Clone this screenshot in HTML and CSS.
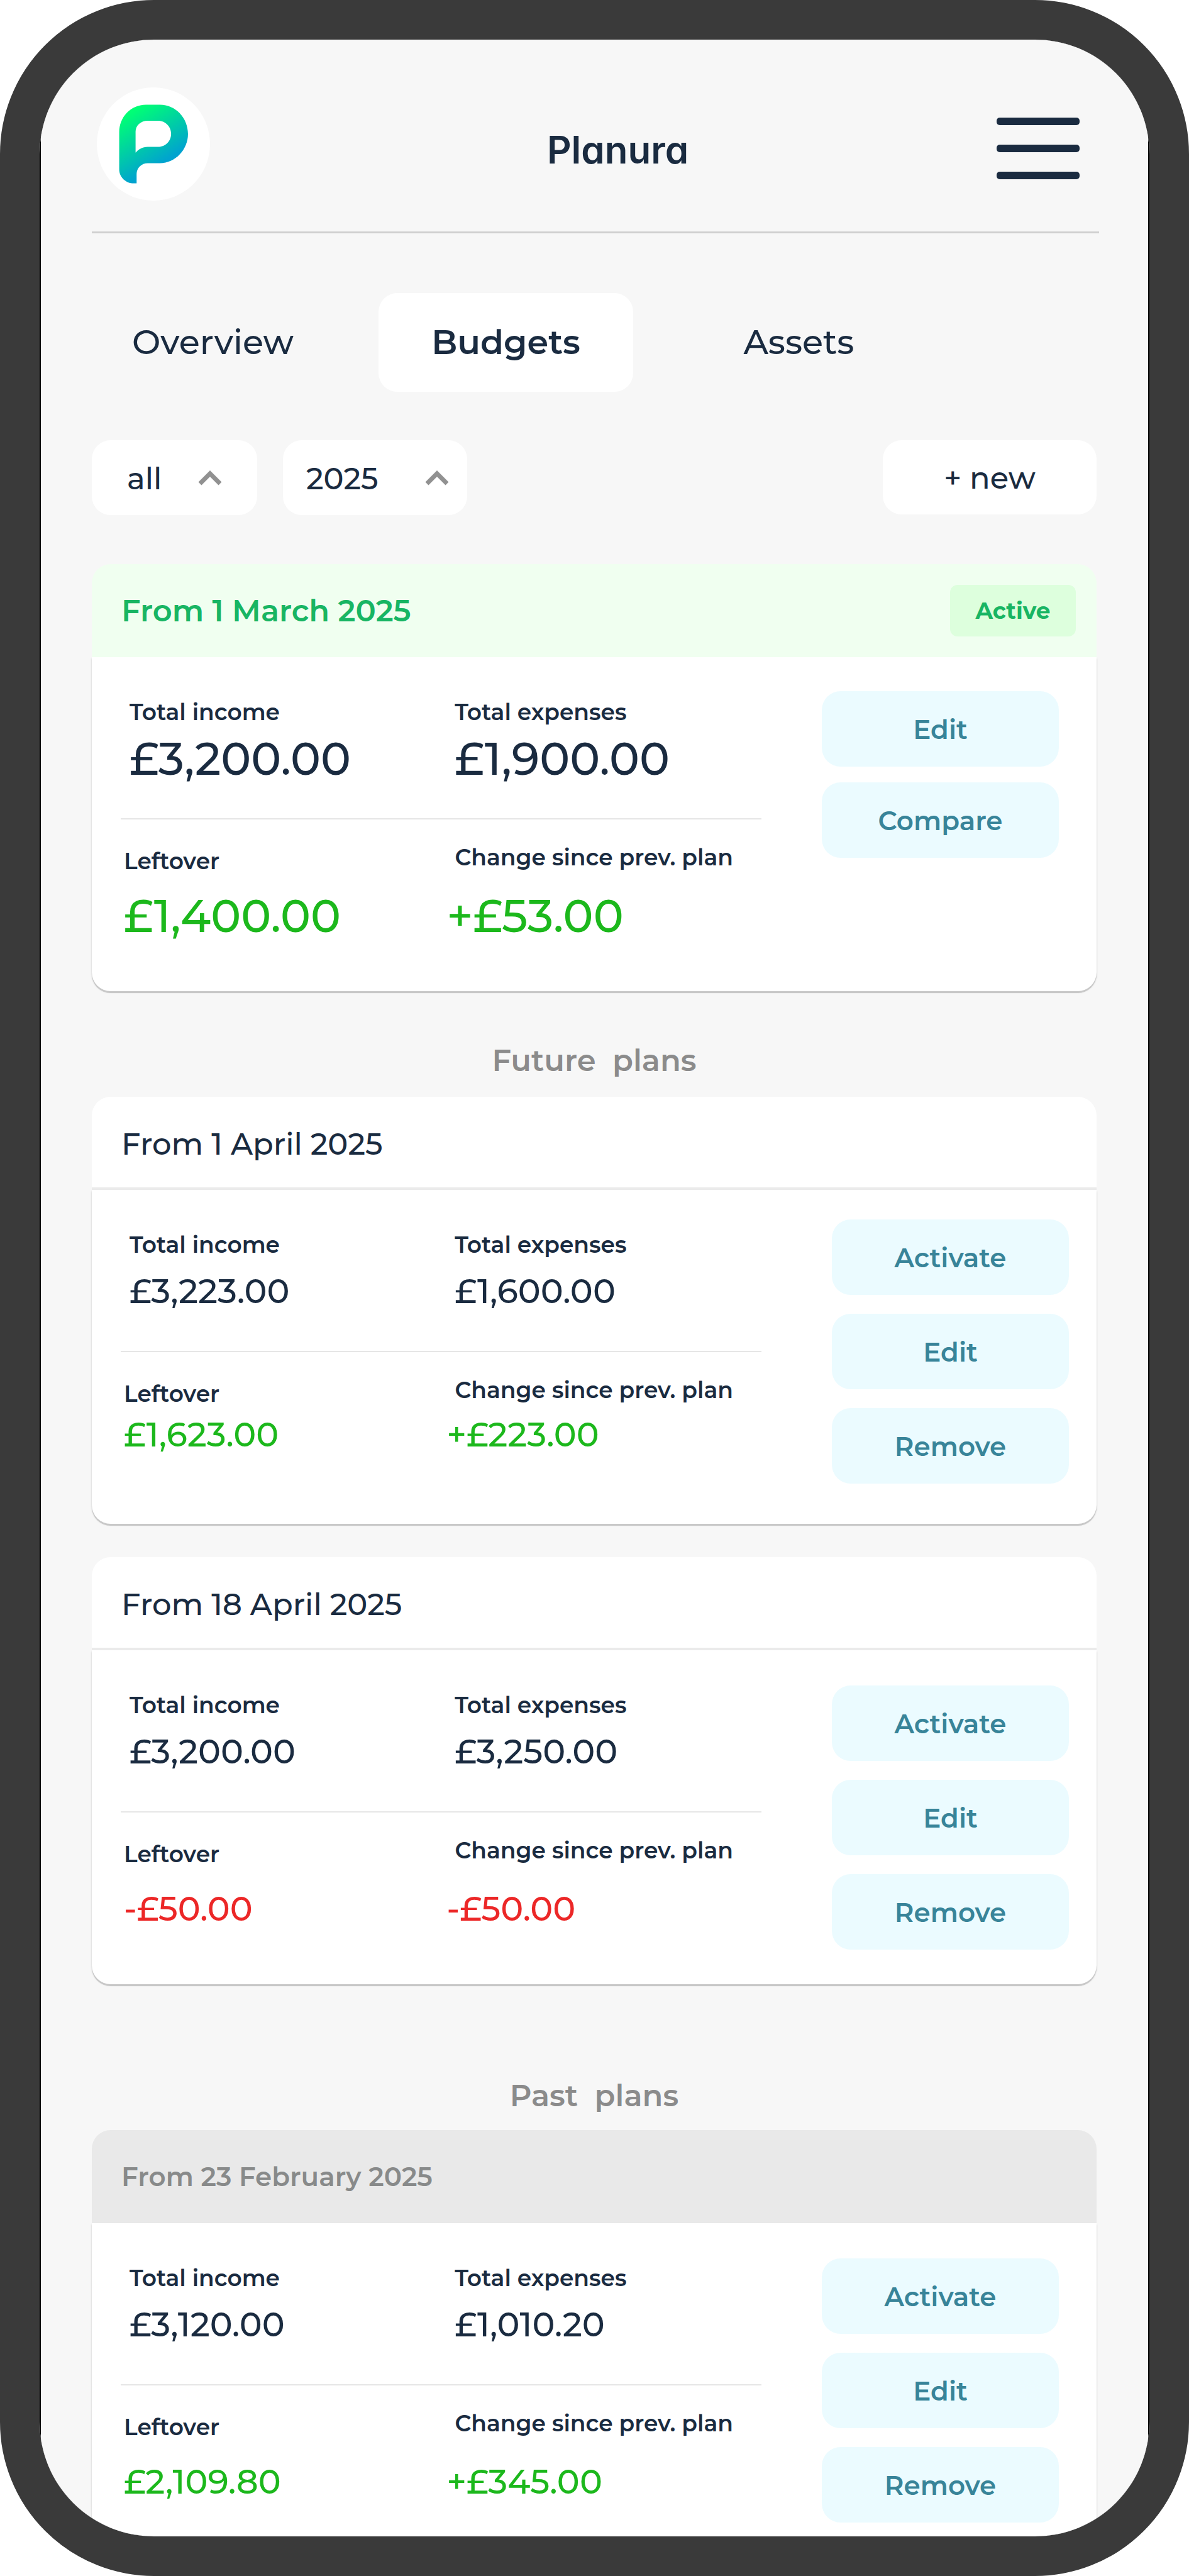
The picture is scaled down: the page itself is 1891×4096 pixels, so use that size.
FILE: index.html
```html
<!DOCTYPE html>
<html lang="en">
<head>
<meta charset="utf-8">
<meta name="viewport" content="width=device-width, initial-scale=1">
<title>Planura – Budgets</title>
<link rel="stylesheet" href="styles.css">
</head>
<body>
<div class="phone">
  <div class="screen">
    <header class="topbar">
      <a class="logo" href="#" aria-label="Planura home">
        <svg viewBox="40 48 645 650" aria-hidden="true">
          <defs>
            <linearGradient id="brand" gradientUnits="userSpaceOnUse" x1="220" y1="200" x2="402" y2="487">
              <stop offset="0" stop-color="#00ff75"/>
              <stop offset="1" stop-color="#00a3cf"/>
            </linearGradient>
          </defs>
          <path fill="url(#brand)" fill-rule="evenodd" d="M166 305C166 218 232 147 320 147H400C489 147 561 222 561 315C561 405 488 483 400 483H330C294 483 266 510 266 545V599H250C204 599 166 563 166 518ZM260 423C276 403 300 389 330 389H390C432 389 464 356 464 314C464 272 430 239 390 239H330C290 239 260 266 260 302Z"/>
        </svg>
      </a>
      <h1 class="brand">Planura</h1>
      <button class="menu" type="button" aria-label="Menu"><span></span><span></span><span></span></button>
    </header>

    <nav class="tabs">
      <a href="#">Overview</a>
      <a href="#" class="current" aria-current="page">Budgets</a>
      <a href="#">Assets</a>
    </nav>

    <div class="filters">
      <label class="filter filter-type">
        <select aria-label="Plan type"><option>all</option></select>
        <svg viewBox="0 0 38 25" aria-hidden="true"><path d="M3 22L19 6L35 22"/></svg>
      </label>
      <label class="filter filter-year">
        <select aria-label="Year"><option>2025</option></select>
        <svg viewBox="0 0 38 25" aria-hidden="true"><path d="M3 22L19 6L35 22"/></svg>
      </label>
      <button class="new" type="button">+ new</button>
    </div>

    <main>
      <article class="card active">
        <header><h2>From 1 March 2025</h2><span class="badge">Active</span></header>
        <div class="body">
          <div class="stats">
            <dl class="totals">
              <div><dt>Total income</dt><dd>£3,200.00</dd></div>
              <div><dt>Total expenses</dt><dd>£1,900.00</dd></div>
            </dl>
            <dl class="outcome">
              <div><dt>Leftover</dt><dd class="up">£1,400.00</dd></div>
              <div><dt>Change since prev. plan</dt><dd class="up">+£53.00</dd></div>
            </dl>
          </div>
          <div class="actions">
            <button type="button">Edit</button>
            <button type="button">Compare</button>
          </div>
        </div>
      </article>

      <h2 class="section future-title">Future&nbsp; plans</h2>

      <article class="card future near">
        <header><h3>From 1 April 2025</h3></header>
        <div class="body">
          <div class="stats">
            <dl class="totals">
              <div><dt>Total income</dt><dd>£3,223.00</dd></div>
              <div><dt>Total expenses</dt><dd>£1,600.00</dd></div>
            </dl>
            <dl class="outcome">
              <div><dt>Leftover</dt><dd class="up">£1,623.00</dd></div>
              <div><dt>Change since prev. plan</dt><dd class="up">+£223.00</dd></div>
            </dl>
          </div>
          <div class="actions">
            <button type="button">Activate</button>
            <button type="button">Edit</button>
            <button type="button">Remove</button>
          </div>
        </div>
      </article>

      <article class="card future">
        <header><h3>From 18 April 2025</h3></header>
        <div class="body">
          <div class="stats">
            <dl class="totals">
              <div><dt>Total income</dt><dd>£3,200.00</dd></div>
              <div><dt>Total expenses</dt><dd>£3,250.00</dd></div>
            </dl>
            <dl class="outcome">
              <div><dt>Leftover</dt><dd class="down">-£50.00</dd></div>
              <div><dt>Change since prev. plan</dt><dd class="down">-£50.00</dd></div>
            </dl>
          </div>
          <div class="actions">
            <button type="button">Activate</button>
            <button type="button">Edit</button>
            <button type="button">Remove</button>
          </div>
        </div>
      </article>

      <h2 class="section past-title">Past&nbsp; plans</h2>

      <article class="card past">
        <header><h3>From 23 February 2025</h3></header>
        <div class="body">
          <div class="stats">
            <dl class="totals">
              <div><dt>Total income</dt><dd>£3,120.00</dd></div>
              <div><dt>Total expenses</dt><dd>£1,010.20</dd></div>
            </dl>
            <dl class="outcome">
              <div><dt>Leftover</dt><dd class="up">£2,109.80</dd></div>
              <div><dt>Change since prev. plan</dt><dd class="up">+£345.00</dd></div>
            </dl>
          </div>
          <div class="actions">
            <button type="button">Activate</button>
            <button type="button">Edit</button>
            <button type="button">Remove</button>
          </div>
        </div>
      </article>
    </main>
  </div>
</div>
</body>
</html>
```
FILE: styles.css
```css
* { box-sizing: border-box; margin: 0; padding: 0; }

:root {
  --ink: #1a2b40;
  --muted: #8b8b8b;
  --radius: 30px;
}

body {
  background: #fff;
  color: var(--ink);
  font-family: Montserrat, Inter, "Open Sans", sans-serif;
  font-weight: 500;
}

button, select { font: inherit; color: inherit; border: 0; cursor: pointer; }
a { color: inherit; text-decoration: none; }

/* Device frame */
.phone {
  height: 100vh;
  border: 63px solid #3a3a3a;
  border-radius: 245px;
  background: #000;
  background-clip: padding-box;
  overflow: hidden;
}
.screen {
  height: 100%;
  margin: 0 2px;
  padding: 0 82px 0 81px;
  background: #f7f7f7;
  overflow: hidden auto;
  scrollbar-width: none;
}

/* Top bar */
.topbar {
  display: grid;
  grid-template-columns: 180px 1fr 132px;
  align-items: center;
  margin-right: -4px;
  padding: 76px 31px 49px 8px;
  border-bottom: 3px solid #d0d0d0;
}
.logo { height: 180px; border-radius: 50%; background: #fff; }
.logo svg { display: block; width: 100%; height: 100%; }
.brand {
  padding: 18px 0 0 46px;
  font-family: Inter, sans-serif;
  font-size: 60px;
  line-height: 70px;
  font-weight: 600;
  font-feature-settings: "cv11";
  text-align: center;
}
.menu {
  display: grid;
  gap: 31px;
  padding-top: 14px;
  background: none;
}
.menu span { height: 12px; border-radius: 5px; background: var(--ink); }

/* Tabs */
.tabs { display: flex; gap: 61px; margin: 95px 0 77px -10px; }
.tabs a {
  width: 405px;
  border-radius: var(--radius);
  font-size: 54px;
  line-height: 157px;
  text-align: center;
}
.tabs .current { background: #fff; font-weight: 600; }

/* Filters */
.filters { display: flex; gap: 41px; margin-bottom: 78px; font-size: 48px; }
.filter { display: grid; align-items: center; }
.filter > * { grid-area: 1 / 1; }
.filter select {
  width: 100%;
  height: 119px;
  padding-top: 2px;
  border-radius: var(--radius);
  background: #fff;
  appearance: none;
}
.filter svg {
  justify-self: end;
  width: 38px;
  height: 25px;
  fill: none;
  stroke: #919191;
  stroke-width: 7;
  overflow: visible;
  pointer-events: none;
}
.filter-type { width: 263px; }
.filter-type select { padding-left: 56px; }
.filter-type svg { margin-right: 56px; }
.filter-year { width: 293px; }
.filter-year select { padding-left: 37px; }
.filter-year svg { margin-right: 29px; }
.new {
  width: 340px;
  height: 118px;
  margin-left: auto;
  padding-top: 2px;
  border-radius: var(--radius);
  background: #fff;
}

/* Section titles */
.section {
  color: var(--muted);
  font-size: 48px;
  line-height: 60px;
  font-weight: 600;
  text-align: center;
}
.future-title { margin: 80px 0 28px; }
.past-title { margin: 147px 0 25px; }

/* Plan cards */
.card + .card { margin-top: 53px; }
.card > header {
  display: flex;
  align-items: center;
  justify-content: space-between;
  height: 148px;
  padding: 0 33px 0 47px;
  border-radius: var(--radius) var(--radius) 0 0;
  background: #fff;
  font-size: 48px;
}
.card > header h2, .card > header h3 { font-size: inherit; font-weight: inherit; }
.card.active > header { background: #f0fff0; color: #18b563; font-weight: 600; }
.card.future > header { padding-top: 6px; border-bottom: 4px solid #ebebeb; }
.card.past > header { background: #e9e9e9; color: #888a8a; font-size: 42px; font-weight: 600; }
.badge {
  width: 200px;
  border-radius: 12px;
  background: #ddffdd;
  font-size: 36px;
  line-height: 82px;
  font-weight: 700;
  text-align: center;
}
.body {
  display: grid;
  grid-template-columns: 1fr 377px;
  column-gap: 96px;
  min-height: 531px;
  padding: 0 60px 0 46px;
  border-radius: 0 0 var(--radius) var(--radius);
  background: #fff;
  box-shadow: 0 3px 0 #c8c8c8, 0 2px 3px rgba(0, 0, 0, 0.2);
}
.future .body { column-gap: 112px; padding-right: 44px; }

.stats { padding-top: 65px; }
.stats dl {
  display: grid;
  grid-auto-flow: column;
}
.stats dl > div { display: contents; }
.stats dt { font-size: 36px; line-height: 44px; font-weight: 600; }
.stats dd { font-size: 54px; line-height: 64px; }
.stats .totals {
  grid-template: 44px auto / 1.06fr 1fr;
  align-content: start;
  row-gap: 20px;
  min-height: 193px;
  padding-left: 14px;
  border-bottom: 2px solid #e6e6e6;
}
.stats .outcome {
  grid-template: 50px auto / 1.08fr 1fr;
  row-gap: 33px;
  padding: 38px 0 0 5px;
}
.outcome div:first-child dt { align-self: end; }
.outcome div:last-child dd { margin-left: -13px; }
.near .stats .outcome { row-gap: 11px; }
.active .stats dd { font-size: 72px; line-height: 88px; }
.active .stats .totals { row-gap: 8px; }
.active .stats .outcome { row-gap: 21px; }
.up { color: #1cb81c; }
.down { color: #ec2727; }

.actions {
  display: grid;
  align-content: start;
  gap: 30px;
  padding-top: 56px;
}
.actions button {
  height: 120px;
  padding-top: 1px;
  border-radius: var(--radius);
  background: #ebfbff;
  color: #388499;
  font-size: 42px;
  font-weight: 600;
}
.active .actions { gap: 25px; padding-top: 54px; }
.near .actions { padding-top: 47px; }
```
